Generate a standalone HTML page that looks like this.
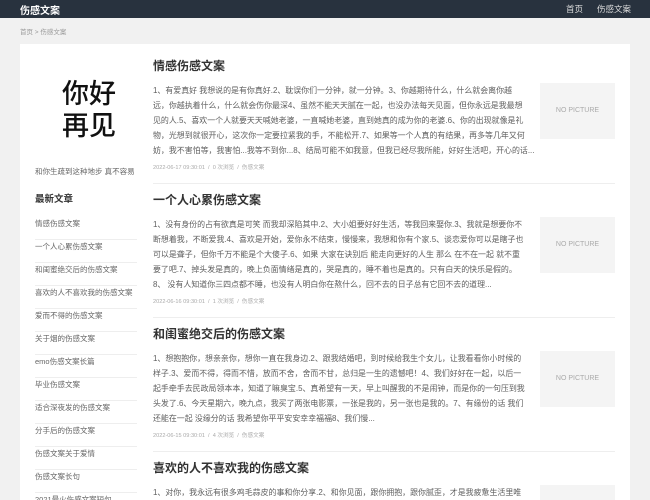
<!DOCTYPE html>
<html><head><meta charset="utf-8"><style>
*{margin:0;padding:0;box-sizing:border-box}
html,body{width:650px;height:500px;overflow:hidden}
body{background:#f1f1f1;font-family:"Liberation Sans","Noto Sans CJK SC",sans-serif;position:relative}
.nav{position:absolute;left:0;top:0;width:650px;height:18px;background:#28323e;color:#fff}
.nav .logo{position:absolute;left:20px;top:2px;font-size:10px;font-weight:bold}
.nav .r{position:absolute;top:3px;font-size:8.5px;color:#ddd}
.bc{position:absolute;left:20px;top:26px;font-size:6.5px;color:#999}
.box{position:absolute;left:20px;top:44px;width:610px;height:456px;background:#fff}
.big{position:absolute;left:62px;top:78px;font-size:27px;line-height:32px;color:#111;font-weight:500}
.sub{position:absolute;left:35px;top:166px;font-size:7.5px;color:#666}
.hd{position:absolute;left:35px;top:191px;font-size:9.5px;font-weight:bold;color:#333}
.li{position:absolute;left:35px;width:102px;font-size:7.5px;color:#666;border-bottom:1px solid #eee;height:23px;line-height:13px}
.art{position:absolute;left:153px;width:462px}
.art h2{font-size:12px;line-height:14px;font-weight:bold;color:#333;position:absolute;top:0;left:0;white-space:nowrap}
.art p{position:absolute;top:24px;left:0;font-size:7.95px;line-height:15px;color:#5e5e5e;white-space:nowrap}
.art .m{position:absolute;top:104px;left:0;font-size:5.6px;color:#aaa;white-space:nowrap}
.art .pic{position:absolute;left:387px;top:24px;width:75px;height:56px;background:#f4f4f4;color:#aaa;font-size:7px;text-align:center;line-height:56px}
.art .sep{position:absolute;left:0;top:124px;width:462px;border-top:1px solid #eee}
</style></head><body>
<div class="nav"><span class="logo">伤感文案</span><span class="r" style="left:566px">首页</span><span class="r" style="left:597px">伤感文案</span></div>
<div class="bc">首页 &gt; 伤感文案</div>
<div class="box"></div>
<div class="big">你好<br>再见</div>
<div class="sub">和你生疏到这种地步 真不容易</div>
<div class="hd">最新文章</div>
<div class="li" style="top:217px">情感伤感文案</div>
<div class="li" style="top:240px">一个人心累伤感文案</div>
<div class="li" style="top:263px">和闺蜜绝交后的伤感文案</div>
<div class="li" style="top:286px">喜欢的人不喜欢我的伤感文案</div>
<div class="li" style="top:309px">爱而不得的伤感文案</div>
<div class="li" style="top:332px">关于烟的伤感文案</div>
<div class="li" style="top:355px">emo伤感文案长篇</div>
<div class="li" style="top:378px">毕业伤感文案</div>
<div class="li" style="top:401px">适合深夜发的伤感文案</div>
<div class="li" style="top:424px">分手后的伤感文案</div>
<div class="li" style="top:447px">伤感文案关于爱情</div>
<div class="li" style="top:470px">伤感文案长句</div>
<div class="li" style="top:493px">2021最火伤感文案短句</div>

<div class="art" style="top:59px"><h2>情感伤感文案</h2>
<p>1、有爱真好 我想说的是有你真好.2、耽误你们一分钟，就一分钟。3、你越期待什么，什么就会离你越<br>远，你越执着什么，什么就会伤你最深4、虽然不能天天腻在一起，也没办法每天见面，但你永远是我最想<br>见的人.5、喜欢一个人就要天天喊她老婆，一直喊她老婆，直到她真的成为你的老婆.6、你的出现就像是礼<br>物，光想到就很开心，这次你一定要拉紧我的手，不能松开.7、如果等一个人真的有结果，再多等几年又何<br>妨，我不害怕等，我害怕...我等不到你...8、结局可能不如我意，但我已经尽我所能，好好生活吧，开心的话...</p>
<div class="m">2022-06-17 09:30:01 &nbsp;/ &nbsp;0 次浏览 &nbsp;/ &nbsp;伤感文案</div><div class="pic">NO PICTURE</div><div class="sep"></div></div>

<div class="art" style="top:193px"><h2>一个人心累伤感文案</h2>
<p>1、没有身份的占有欲真是可笑 而我却深陷其中.2、大小姐要好好生活，等我回来娶你.3、我就是想要你不<br>断想着我，不断爱我.4、喜欢是开始，爱你永不结束，慢慢来，我想和你有个家.5、谈恋爱你可以是瞎子也<br>可以是聋子，但你千万不能是个大傻子.6、如果 大家在诀别后 能走向更好的人生 那么 在不在一起 就不重<br>要了吧.7、掉头发是真的，晚上负面情绪是真的，哭是真的，睡不着也是真的。只有白天的快乐是假的。<br>8、 没有人知道你三四点都不睡，也没有人明白你在熬什么，回不去的日子总有它回不去的道理...</p>
<div class="m">2022-06-16 09:30:01 &nbsp;/ &nbsp;1 次浏览 &nbsp;/ &nbsp;伤感文案</div><div class="pic">NO PICTURE</div><div class="sep"></div></div>

<div class="art" style="top:327px"><h2>和闺蜜绝交后的伤感文案</h2>
<p>1、想抱抱你，想亲亲你，想你一直在我身边.2、跟我结婚吧，到时候给我生个女儿，让我看看你小时候的<br>样子.3、爱而不得，得而不惜，放而不舍，舍而不甘，总归是一生的遗憾吧！4、我们好好在一起，以后一<br>起手牵手去民政局领本本，知道了嘛臭宝.5、真希望有一天，早上叫醒我的不是闹钟，而是你的一句压到我<br>头发了.6、今天星期六，晚九点，我买了两张电影票，一张是我的，另一张也是我的。7、有缘份的话 我们<br>还能在一起 没缘分的话 我希望你平平安安幸幸福福8、我们慢...</p>
<div class="m">2022-06-15 09:30:01 &nbsp;/ &nbsp;4 次浏览 &nbsp;/ &nbsp;伤感文案</div><div class="pic">NO PICTURE</div><div class="sep"></div></div>

<div class="art" style="top:461px"><h2>喜欢的人不喜欢我的伤感文案</h2>
<p>1、对你，我永远有很多鸡毛蒜皮的事和你分享.2、和你见面，跟你拥抱，跟你腻歪，才是我疲惫生活里唯</p>
<div class="pic"></div></div>
</body></html>
